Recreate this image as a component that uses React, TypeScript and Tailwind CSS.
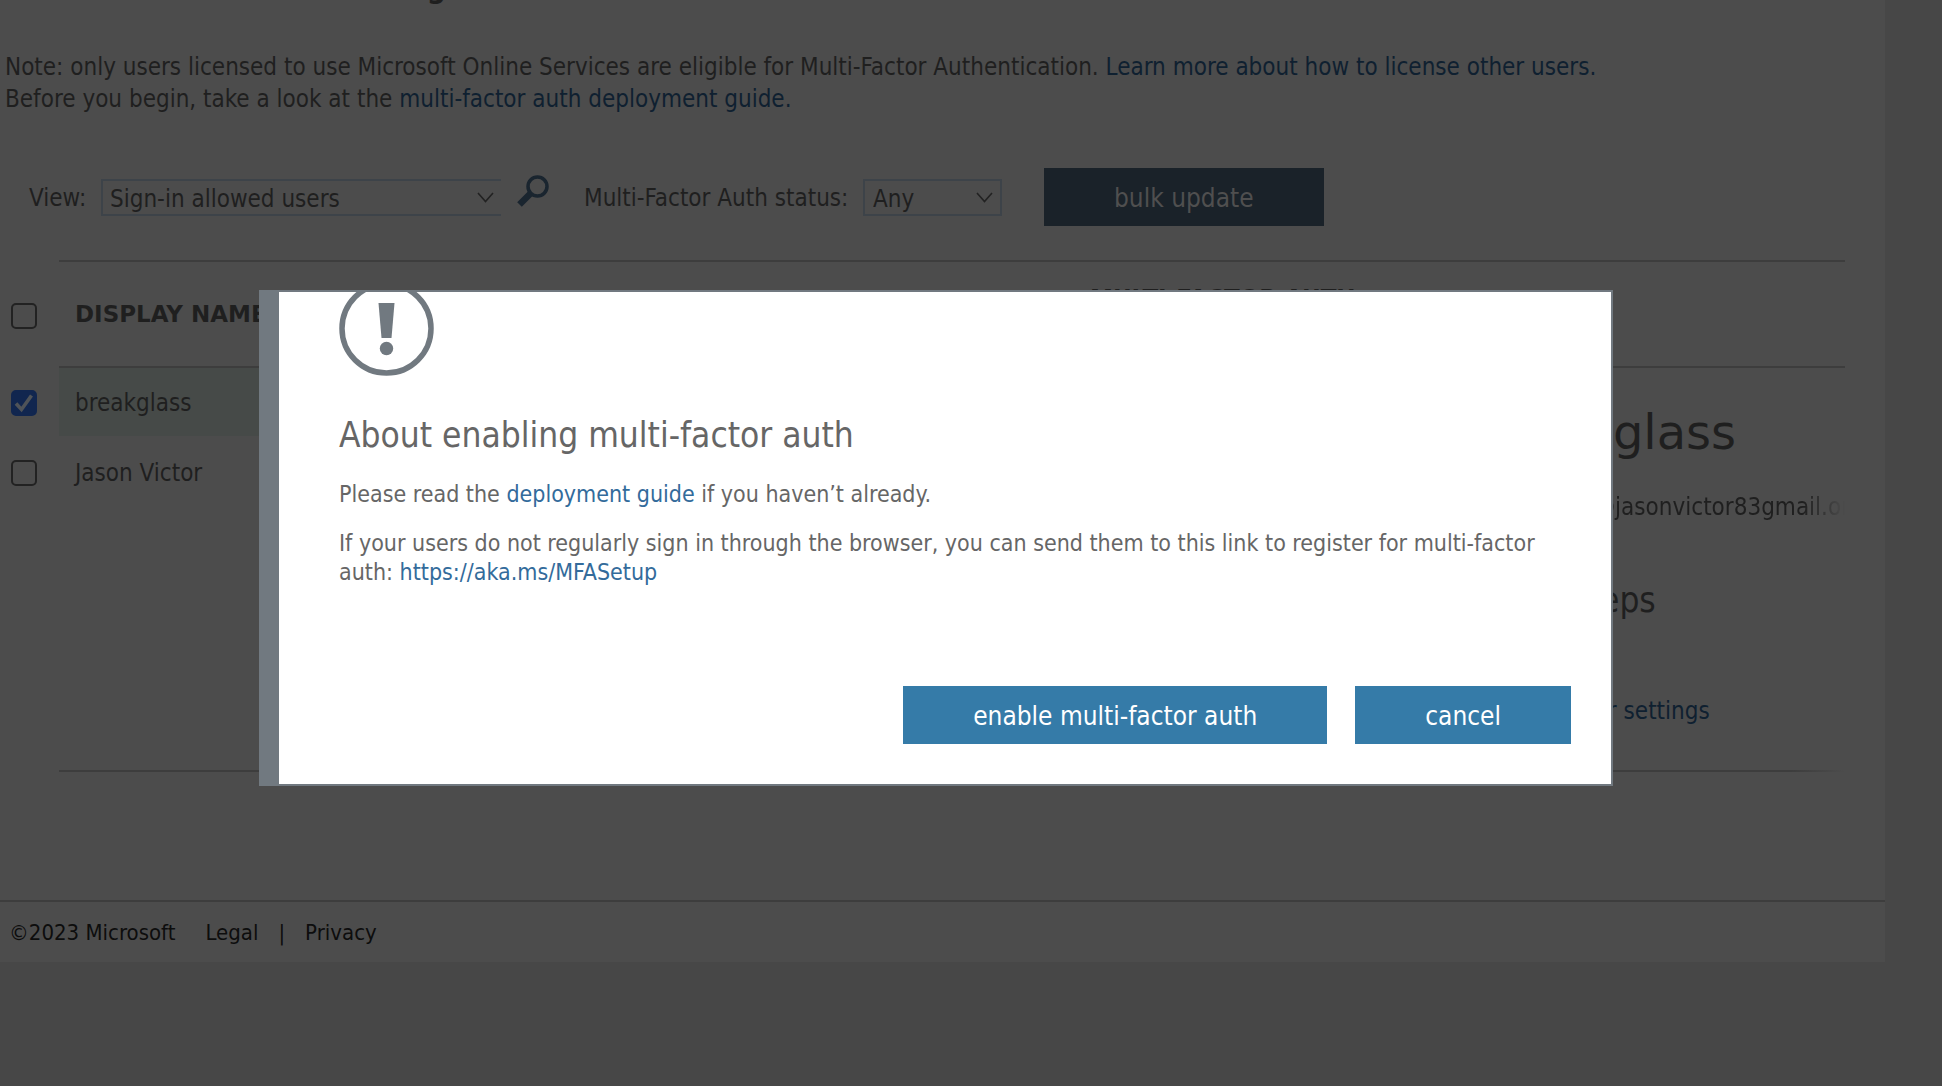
import React from "react";

const link = "text-[#0f2030]";

function Chevron({ className }: { className: string }) {
  return (
    <svg viewBox="0 0 17 11" className={"pointer-events-none absolute h-[11px] w-[17px] " + className} fill="none" stroke="#222" strokeWidth="1.6">
      <path d="M1 1l7.500 8.500L16 1" />
    </svg>
  );
}

function Check({ label, checked = false }: { label: string; checked?: boolean }) {
  return (
    <span className="relative mt-1 ml-[11px] block size-[26px]">
      <input
        type="checkbox"
        aria-label={label}
        defaultChecked={checked}
        className="peer block size-[26px] appearance-none rounded-[5px] border-2 border-[#222] checked:border-[#11264f] checked:bg-[#11264f]"
      />
      <svg viewBox="0 0 26 26" className="pointer-events-none absolute inset-0 hidden size-[26px] peer-checked:block" fill="none" stroke="#4f5358" strokeWidth="3.600">
        <path d="M5 13.500l5.500 6L20.500 5.500" />
      </svg>
    </span>
  );
}

function DialogButton({ children }: { children: React.ReactNode }) {
  return <button className="h-[58px] bg-[#357ba8] px-[70px] pt-0.5 text-[26px] text-white">{children}</button>;
}

export default function App() {
  return (
    <div className="min-h-screen bg-[#474747] pr-[57px] font-['DejaVu_Sans_Condensed','Noto_Sans',sans-serif] text-[24px] leading-8 text-[#1f1f1f]">
      <div className="bg-[#4c4c4c]">
        <nav className="flex h-1 items-end gap-10 overflow-hidden pl-1 text-[30px] leading-[32px]">
          <a href="#users">users</a>
          <a href="#settings" className="pl-[103px] font-bold">service settings</a>
        </nav>

        <p className="pt-[47px] pl-[5px]">
          Note: only users licensed to use Microsoft Online Services are eligible for Multi-Factor Authentication.{" "}
          <a href="#license" className={link}>Learn more about how to license other users.</a>
          <br />
          Before you begin, take a look at the{" "}
          <a href="#guide" className={link}>multi-factor auth deployment guide.</a>
        </p>

        <form className="flex items-center pt-[53px] pl-[29px]">
          <label htmlFor="view" className="w-[72px] pt-0.5">View:</label>
          <span className="relative">
            <select id="view" className="block h-[37px] w-[400px] appearance-none border-2 border-r-0 border-[#3d4349] pt-0.5 pl-[7px]">
              <option>Sign-in allowed users</option>
            </select>
            <Chevron className="top-[13px] right-[7px]" />
          </span>
          <button type="button" aria-label="Search" className="mr-[35px] mb-3 ml-4">
            <svg viewBox="0 0 32 32" className="size-8" fill="none" stroke="#1a252f">
              <circle cx="20.500" cy="11.500" r="9.500" strokeWidth="3.500" />
              <path d="M13.500 18.500L2.500 29.500" strokeWidth="6.500" />
            </svg>
          </button>
          <label htmlFor="status" className="w-[279px] pt-0.5 whitespace-nowrap">Multi-Factor Auth status:</label>
          <span className="relative">
            <select id="status" className="block h-[37px] w-[139px] appearance-none border-2 border-[#3d4349] pt-0.5 pl-2">
              <option>Any</option>
            </select>
            <Chevron className="top-[13px] right-[9px]" />
          </span>
          <button type="button" className="ml-[42px] h-[58px] bg-[#1a2229] px-[70px] pt-0.5 text-[26px] text-[#4f4f4f]">bulk update</button>
        </form>

        <main className="mr-10 pt-[34px]">
          <div className="ml-[59px] h-0.5 bg-[#3d3d3d]" />
          <div className="flex min-h-[508px]">
            <div className="min-w-0 flex-1">
              <table className="w-full table-fixed border-separate border-spacing-0 text-left">
                <thead>
                  <tr className="h-[104px] font-['DejaVu_Sans',sans-serif] text-[23px] leading-8">
                    <th className="w-[59px] p-0"><Check label="Select all" /></th>
                    <th className="w-[420px] py-0 pl-4 font-bold">DISPLAY NAME</th>
                    <th className="py-0 font-bold">USER NAME</th>
                    <th className="w-[387px] py-0 font-bold">MULTI-FACTOR AUTH<br />STATUS</th>
                  </tr>
                </thead>
                <tbody>
                  <tr className="h-[70px]">
                    <td className="p-0"><Check label="breakglass" checked /></td>
                    <td className="border-t-2 border-[#3d3d3d] bg-[#464a48] pt-0.5 pb-0 pl-4">breakglass</td>
                    <td className="border-t-2 border-[#3d3d3d] bg-[#464a48] p-0">breakglass@</td>
                    <td className="border-t-2 border-[#3d3d3d] bg-[#464a48] p-0">Disabled</td>
                  </tr>
                  <tr className="h-[70px]">
                    <td className="p-0"><Check label="Jason Victor" /></td>
                    <td className="pt-1 pb-0 pl-4">Jason Victor</td>
                    <td className="p-0">jasonvictor83</td>
                    <td className="p-0">Disabled</td>
                  </tr>
                </tbody>
              </table>
            </div>
            <aside className="w-[368px] pt-[104px]">
              <div className="border-t-2 border-[#3d3d3d] pt-[34px]">
                <h2 className="font-['DejaVu_Sans',sans-serif] text-[48px] leading-[60px]">breakglass</h2>
                <p className="overflow-hidden pt-[29px] whitespace-nowrap [mask-image:linear-gradient(to_right,black_325px,transparent)]">
                  breakglass@jasonvictor83gmail.onmicrosoft.com
                </p>
                <h3 className="pt-[54px] text-[35px] leading-[46px]">quick steps</h3>
                <a href="#user" className={"mt-[72px] block " + link}>Manage user settings</a>
              </div>
            </aside>
          </div>
          <div className="ml-[59px] h-0.5 bg-linear-to-r from-[#3d3d3d] from-97% to-[#4c4c4c]" />
        </main>

        <footer className="mt-32 flex h-[62px] items-center border-t-2 border-[#3d3d3d] pt-0.5 pl-[9px] text-[22px] text-[#0d0d0d]">
          <span className="mr-[30px]">©2023 Microsoft</span>
          <a href="#legal">Legal</a>
          <span className="mx-5">|</span>
          <a href="#privacy">Privacy</a>
        </footer>
      </div>

      <div className="fixed inset-0 pt-[290px] pr-[329px] pl-[259px]">
        <section role="dialog" aria-labelledby="title" className="border-2 border-l-[20px] border-[#717980] bg-white pr-10 pb-10 pl-[60px] text-[23px] leading-[29px] text-[#666]">
          <svg viewBox="0 11 95 84" className="block h-[84px] w-[95px]" fill="none">
            <circle cx="47.500" cy="47.500" r="44.500" stroke="#717980" strokeWidth="5.500" />
            <path d="M39.500 22h16l-3 35h-10z" fill="#717980" />
            <circle cx="47.500" cy="67.500" r="6.700" fill="#717980" />
          </svg>
          <h1 id="title" className="pt-[36px] text-[35px] leading-[46px]">About enabling multi-factor auth</h1>
          <p className="pt-[22px]">
            Please read the <a href="#deploy" className="text-[#336b9b]">deployment guide</a> if you haven’t already.
          </p>
          <p className="pt-5">
            If your users do not regularly sign in through the browser, you can send them to this link to register for multi-factor auth:{" "}
            <a href="https://aka.ms/MFASetup" className="text-[#336b9b]">https://aka.ms/MFASetup</a>
          </p>
          <div className="flex justify-end gap-7 pt-[99px]">
            <DialogButton>enable multi-factor auth</DialogButton>
            <DialogButton>cancel</DialogButton>
          </div>
        </section>
      </div>
    </div>
  );
}
